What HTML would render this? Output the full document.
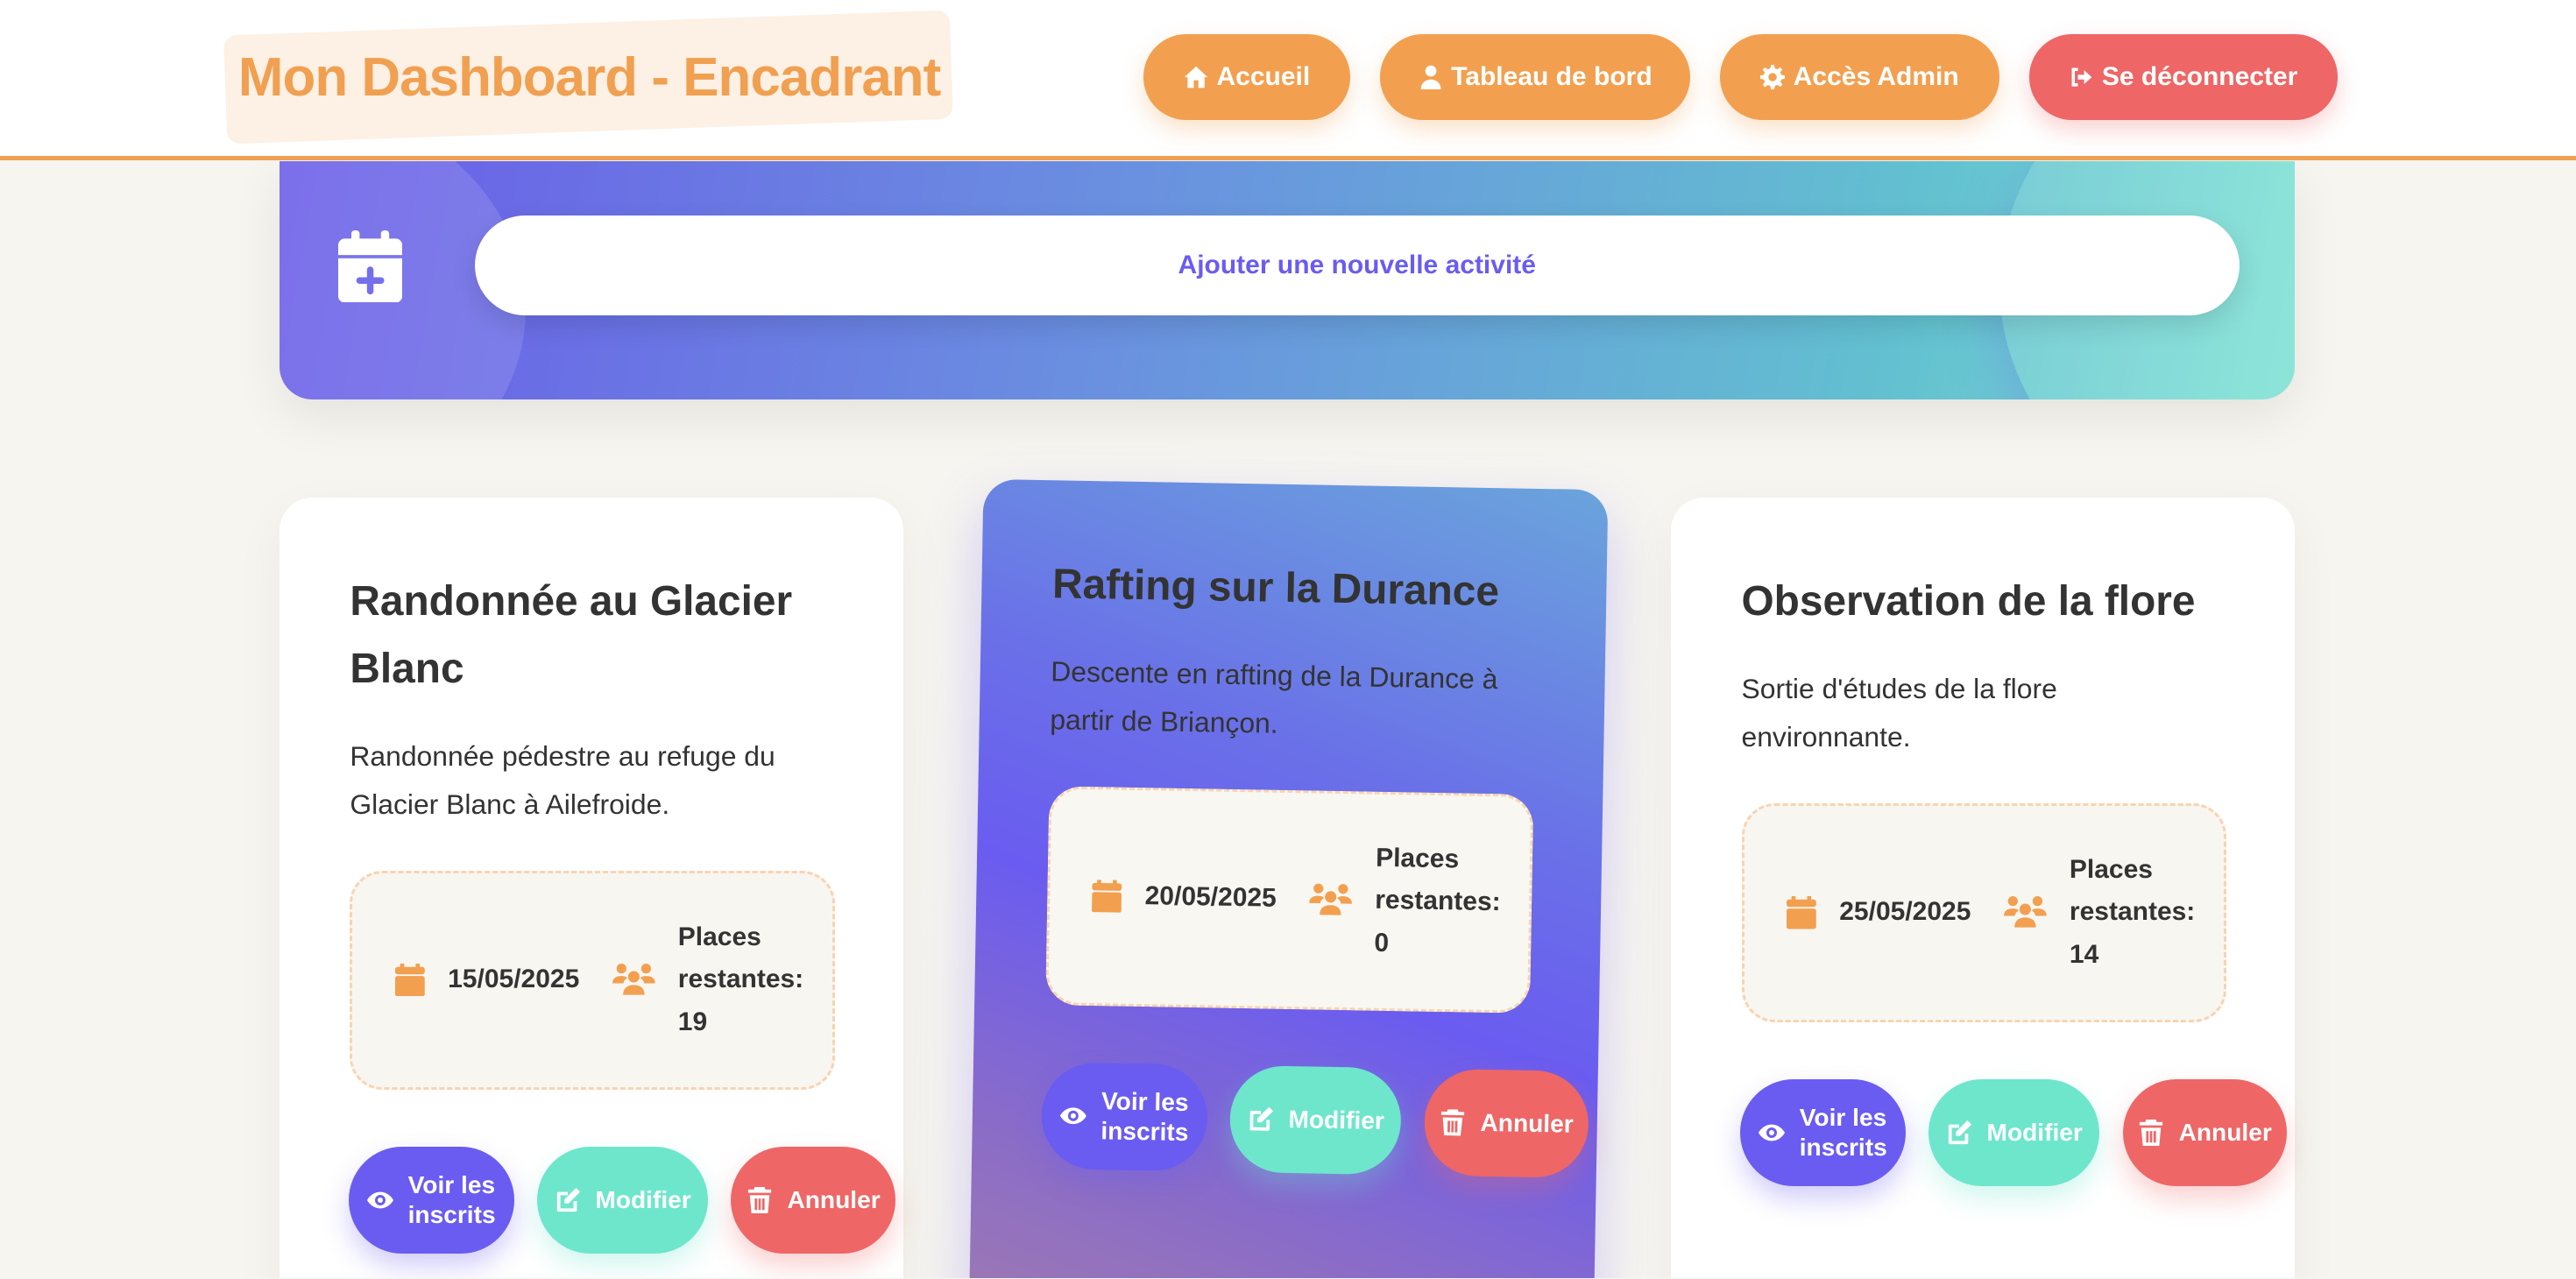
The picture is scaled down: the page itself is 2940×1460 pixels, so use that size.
<!DOCTYPE html>
<html><head><meta charset="utf-8"><style>
html,body{margin:0;padding:0}
body{width:2940px;height:1460px;overflow:hidden;background:#f7f5f0;font-family:"Liberation Sans",Arial,sans-serif}
#w{zoom:1.875;width:1568px;height:778px;position:relative;overflow:hidden}
.hdr{position:absolute;left:0;top:0;width:1568px;height:95px;background:#fff;border-bottom:3px solid #f0a050;z-index:2}
.tbox{position:absolute;left:137px;top:14px;width:442px;height:66px;background:#fdf0e4;border-radius:8px;transform:rotate(-2deg)}
.title{position:absolute;left:145px;top:28px;font-size:33px;font-weight:bold;color:#f0a050;letter-spacing:-0.5px}
.nb{position:absolute;top:21px;height:52px;border-radius:26px;background:#f2a050;color:#fff;font-weight:bold;font-size:16px;display:flex;align-items:center;justify-content:center;gap:5px;box-shadow:0 6px 14px rgba(240,160,80,.3)}
.nb svg{width:15px;height:15px;fill:#fff}
.banner{position:absolute;left:170px;top:98px;width:1227px;height:145px;border-radius:0 0 20px 20px;background:linear-gradient(100deg,#6a5ce8 0%,#6a8ee0 40%,#62c0d0 80%,#7ee2d4 100%);overflow:hidden;box-shadow:0 10px 30px rgba(0,0,0,.08)}
.banner .c1{position:absolute;left:-160px;top:-40px;width:310px;height:260px;border-radius:50%;background:rgba(255,255,255,.12)}
.banner .c2{position:absolute;left:1047px;top:-70px;width:300px;height:290px;border-radius:50%;background:rgba(255,255,255,.12)}
.add{position:absolute;left:119px;top:33px;width:1074px;height:61px;border-radius:31px;background:#fff;color:#6a5cf0;font-weight:bold;font-size:16px;display:flex;align-items:center;justify-content:center;box-shadow:0 6px 16px rgba(0,0,0,.12)}
.card{position:absolute;width:380px;height:520px;background:#fff;border-radius:20px;box-sizing:border-box;padding:43px 43px;box-shadow:0 10px 30px rgba(0,0,0,.05)}
.card h2{margin:0;font-size:25.5px;line-height:41px;color:#333;font-weight:bold}
.card p{margin:18px 0 0;font-size:17px;line-height:29px;color:#333}
.info{margin-top:26px;width:295px;box-sizing:border-box;border:2px dashed #f8d4b0;border-radius:20px;background:#f8f6f1;display:flex;align-items:center;padding:26px 0 26px 26px;font-weight:bold;font-size:16px;color:#333;line-height:26px}
.info .d{display:flex;align-items:center;gap:14px;margin-right:20px}
.info .pl{display:flex;align-items:center;gap:14px}
.btns{display:flex;gap:14px;margin-top:35px;margin-left:-1px}
.b{flex-shrink:0;height:65px;border-radius:33px;color:#fff;font-weight:bold;font-size:15px;display:flex;align-items:center;justify-content:center;gap:9px;line-height:18px}
.b svg{width:16px;height:16px;fill:#fff}
.pu{background:#6a5cf0;width:101px;box-shadow:0 8px 16px rgba(106,92,240,.3)}
.te{background:#6ee6cc;width:104px;box-shadow:0 8px 16px rgba(110,230,204,.3)}
.re{background:#ee6666;width:100px;box-shadow:0 8px 16px rgba(238,102,102,.3)}
.c2{background:linear-gradient(200deg,#6aa4dc 0%,#6a70e8 35%,#6a5cf0 55%,#8a6cc8 80%,#a07ab0 100%);transform:rotate(1deg);box-shadow:0 15px 35px rgba(106,92,240,.3)}
.c2 .info{background:#f8f7f2}
</style></head><body><div id="w">
<div class="hdr">
 <div class="tbox"></div>
 <div class="title">Mon Dashboard - Encadrant</div>
 <div class="nb" style="left:696px;width:126px"><svg viewBox="0 0 16 16"><path d="M8 1L0.5 8h2v7h4v-5h3v5h4V8h2z"/></svg>Accueil</div>
 <div class="nb" style="left:840px;width:189px"><svg viewBox="0 0 16 16"><circle cx="8" cy="4" r="3.6"/><path d="M1.5 16c0-4 2.8-6.5 6.5-6.5s6.5 2.5 6.5 6.5z"/></svg>Tableau de bord</div>
 <div class="nb" style="left:1047px;width:170px"><svg viewBox="0 0 16 16"><path d="M7 0h2l.4 2.2 1.6.7 1.9-1.3 1.4 1.4-1.3 1.9.7 1.6L16 7v2l-2.2.4-.7 1.6 1.3 1.9-1.4 1.4-1.9-1.3-1.6.7L9 16H7l-.4-2.2-1.6-.7-1.9 1.3-1.4-1.4 1.3-1.9-.7-1.6L0 9V7l2.2-.4.7-1.6L1.6 3.1 3 1.7l1.9 1.3 1.6-.7zM8 5.3A2.7 2.7 0 1 0 8 10.7 2.7 2.7 0 1 0 8 5.3z"/></svg>Accès Admin</div>
 <div class="nb" style="left:1235px;width:188px;background:#ee6666;box-shadow:0 6px 14px rgba(238,102,102,.3)"><svg viewBox="0 0 16 16"><path d="M6 2H2v12h4v-2H4V4h2zM10 3.5v3H6v3h4v3L15 8z"/></svg>Se déconnecter</div>
</div>
<div class="banner"><div class="c1"></div><div class="c2"></div>
 <svg style="position:absolute;left:36px;top:42px" width="39" height="44" viewBox="0 0 39 44"><rect x="8" y="0" width="5" height="8" rx="2" fill="#fff"/><rect x="26" y="0" width="5" height="8" rx="2" fill="#fff"/><path d="M4 5h31a4 4 0 0 1 4 4v6H0V9a4 4 0 0 1 4-4z" fill="#fff"/><path d="M0 17h39v23a4 4 0 0 1-4 4H4a4 4 0 0 1-4-4z" fill="#fff"/><rect x="17.5" y="22" width="4" height="17" rx="2" fill="#7470ec"/><rect x="11" y="28.5" width="17" height="4" rx="2" fill="#7470ec"/></svg>
 <div class="add">Ajouter une nouvelle activité</div>
</div>

<div class="card" style="left:170px;top:303px">
 <h2>Randonnée au Glacier Blanc</h2>
 <p>Randonnée pédestre au refuge du Glacier Blanc à Ailefroide.</p>
 <div class="info"><div class="d"><svg width="18" height="20" viewBox="0 0 18 20"><rect x="3" y="0" width="2.5" height="4" fill="#f2a050"/><rect x="12.5" y="0" width="2.5" height="4" fill="#f2a050"/><rect x="0" y="2" width="18" height="4.5" rx="1.5" fill="#f2a050"/><rect x="0" y="7.5" width="18" height="12.5" rx="1.5" fill="#f2a050"/></svg><span>15/05/2025</span></div><div class="pl"><svg width="26" height="20" viewBox="0 0 26 20"><circle cx="5.5" cy="3" r="3" fill="#f2a050"/><circle cx="20.5" cy="3" r="3" fill="#f2a050"/><circle cx="13" cy="8" r="3.5" fill="#f2a050"/><path d="M0 12c0-3 2-4.5 5.5-4.5 2 0 3 .6 3.5 1.2-1.5 1-2.2 2.2-2.3 3.3z" fill="#f2a050"/><path d="M26 12c0-3-2-4.5-5.5-4.5-2 0-3 .6-3.5 1.2 1.5 1 2.2 2.2 2.3 3.3z" fill="#f2a050"/><path d="M6.5 19c0-4 2.5-6 6.5-6s6.5 2 6.5 6z" fill="#f2a050"/></svg><span>Places<br>restantes:<br>19</span></div></div>
 <div class="btns"><div class="b pu"><svg viewBox="0 0 16 16"><path d="M8 3C4 3 1.2 5.8 0 8c1.2 2.2 4 5 8 5s6.8-2.8 8-5c-1.2-2.2-4-5-8-5zm0 8.2A3.2 3.2 0 1 1 8 4.8a3.2 3.2 0 0 1 0 6.4z"/><circle cx="8" cy="8" r="1.6"/></svg><span>Voir les<br>inscrits</span></div><div class="b te"><svg viewBox="0 0 16 16"><path d="M2 3h6v2H3.5v8h8V8.5h2V14a1 1 0 0 1-1 1H2.5A1 1 0 0 1 1.5 14V4a1 1 0 0 1 .5-1zM13 .5l2.5 2.5-7 7H6V7.5z"/></svg>Modifier</div><div class="b re"><svg viewBox="0 0 16 16"><path d="M5 0h6l.5 1.5H15V3.5H1V1.5h3.5zM2 5h12l-1 11H3zM5 7v7h1.5V7zm2.3 0v7h1.4V7zm2.2 0v7H11V7z"/></svg>Annuler</div></div>
</div>

<div class="card c2" style="left:594px;top:295px;height:520px">
 <h2>Rafting sur la Durance</h2>
 <p>Descente en rafting de la Durance à partir de Briançon.</p>
 <div class="info"><div class="d"><svg width="18" height="20" viewBox="0 0 18 20"><rect x="3" y="0" width="2.5" height="4" fill="#f2a050"/><rect x="12.5" y="0" width="2.5" height="4" fill="#f2a050"/><rect x="0" y="2" width="18" height="4.5" rx="1.5" fill="#f2a050"/><rect x="0" y="7.5" width="18" height="12.5" rx="1.5" fill="#f2a050"/></svg><span>20/05/2025</span></div><div class="pl"><svg width="26" height="20" viewBox="0 0 26 20"><circle cx="5.5" cy="3" r="3" fill="#f2a050"/><circle cx="20.5" cy="3" r="3" fill="#f2a050"/><circle cx="13" cy="8" r="3.5" fill="#f2a050"/><path d="M0 12c0-3 2-4.5 5.5-4.5 2 0 3 .6 3.5 1.2-1.5 1-2.2 2.2-2.3 3.3z" fill="#f2a050"/><path d="M26 12c0-3-2-4.5-5.5-4.5-2 0-3 .6-3.5 1.2 1.5 1 2.2 2.2 2.3 3.3z" fill="#f2a050"/><path d="M6.5 19c0-4 2.5-6 6.5-6s6.5 2 6.5 6z" fill="#f2a050"/></svg><span>Places<br>restantes:<br>0</span></div></div>
 <div class="btns"><div class="b pu"><svg viewBox="0 0 16 16"><path d="M8 3C4 3 1.2 5.8 0 8c1.2 2.2 4 5 8 5s6.8-2.8 8-5c-1.2-2.2-4-5-8-5zm0 8.2A3.2 3.2 0 1 1 8 4.8a3.2 3.2 0 0 1 0 6.4z"/><circle cx="8" cy="8" r="1.6"/></svg><span>Voir les<br>inscrits</span></div><div class="b te"><svg viewBox="0 0 16 16"><path d="M2 3h6v2H3.5v8h8V8.5h2V14a1 1 0 0 1-1 1H2.5A1 1 0 0 1 1.5 14V4a1 1 0 0 1 .5-1zM13 .5l2.5 2.5-7 7H6V7.5z"/></svg>Modifier</div><div class="b re"><svg viewBox="0 0 16 16"><path d="M5 0h6l.5 1.5H15V3.5H1V1.5h3.5zM2 5h12l-1 11H3zM5 7v7h1.5V7zm2.3 0v7h1.4V7zm2.2 0v7H11V7z"/></svg>Annuler</div></div>
</div>

<div class="card" style="left:1017px;top:303px">
 <h2>Observation de la flore</h2>
 <p>Sortie d'études de la flore environnante.</p>
 <div class="info"><div class="d"><svg width="18" height="20" viewBox="0 0 18 20"><rect x="3" y="0" width="2.5" height="4" fill="#f2a050"/><rect x="12.5" y="0" width="2.5" height="4" fill="#f2a050"/><rect x="0" y="2" width="18" height="4.5" rx="1.5" fill="#f2a050"/><rect x="0" y="7.5" width="18" height="12.5" rx="1.5" fill="#f2a050"/></svg><span>25/05/2025</span></div><div class="pl"><svg width="26" height="20" viewBox="0 0 26 20"><circle cx="5.5" cy="3" r="3" fill="#f2a050"/><circle cx="20.5" cy="3" r="3" fill="#f2a050"/><circle cx="13" cy="8" r="3.5" fill="#f2a050"/><path d="M0 12c0-3 2-4.5 5.5-4.5 2 0 3 .6 3.5 1.2-1.5 1-2.2 2.2-2.3 3.3z" fill="#f2a050"/><path d="M26 12c0-3-2-4.5-5.5-4.5-2 0-3 .6-3.5 1.2 1.5 1 2.2 2.2 2.3 3.3z" fill="#f2a050"/><path d="M6.5 19c0-4 2.5-6 6.5-6s6.5 2 6.5 6z" fill="#f2a050"/></svg><span>Places<br>restantes:<br>14</span></div></div>
 <div class="btns"><div class="b pu"><svg viewBox="0 0 16 16"><path d="M8 3C4 3 1.2 5.8 0 8c1.2 2.2 4 5 8 5s6.8-2.8 8-5c-1.2-2.2-4-5-8-5zm0 8.2A3.2 3.2 0 1 1 8 4.8a3.2 3.2 0 0 1 0 6.4z"/><circle cx="8" cy="8" r="1.6"/></svg><span>Voir les<br>inscrits</span></div><div class="b te"><svg viewBox="0 0 16 16"><path d="M2 3h6v2H3.5v8h8V8.5h2V14a1 1 0 0 1-1 1H2.5A1 1 0 0 1 1.5 14V4a1 1 0 0 1 .5-1zM13 .5l2.5 2.5-7 7H6V7.5z"/></svg>Modifier</div><div class="b re"><svg viewBox="0 0 16 16"><path d="M5 0h6l.5 1.5H15V3.5H1V1.5h3.5zM2 5h12l-1 11H3zM5 7v7h1.5V7zm2.3 0v7h1.4V7zm2.2 0v7H11V7z"/></svg>Annuler</div></div>
</div>
</div></body></html>
